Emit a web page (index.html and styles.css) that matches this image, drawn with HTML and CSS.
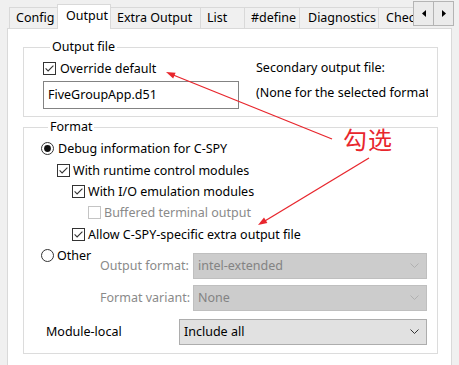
FILE: index.html
```html
<!DOCTYPE html>
<html>
<head>
<meta charset="utf-8">
<link rel="stylesheet" href="styles.css">
</head>
<body>
<div class="window">
  <div class="tabbar">
    <div class="tabstrip">
      <div class="tab w-config">Config</div>
      <div class="tab tab-sel w-output">Output</div>
      <div class="tab w-extra">Extra Output</div>
      <div class="tab w-list">List</div>
      <div class="tab w-define">#define</div>
      <div class="tab w-diag">Diagnostics</div>
      <div class="tab w-chec">Checker</div>
    </div>
    <div class="scroller">
      <div class="sbtn"><svg width="4" height="7" viewBox="0 0 4 7"><path d="M4 0 L0 3.5 L4 7 Z" fill="#000"/></svg></div>
      <div class="sbtn"><svg width="4" height="7" viewBox="0 0 4 7"><path d="M0 0 L4 3.5 L0 7 Z" fill="#000"/></svg></div>
    </div>
  </div>

  <div class="page">
    <fieldset class="group group-out">
      <legend>Output file</legend>
      <div class="out-cols">
        <div class="out-left">
          <label class="row">
            <svg class="ico" viewBox="0 0 13 13"><rect x="0.5" y="0.5" width="12" height="12" fill="#fff" stroke="#333"/><path d="M2.6 6.4 L5.1 8.9 L10.4 3.6" fill="none" stroke="#333" stroke-width="1.1"/></svg>
            <span>Override default</span>
          </label>
          <div class="textbox">FiveGroupApp.d51</div>
        </div>
        <div class="out-right">
          <div class="line">Secondary output file:</div>
          <div class="line line2">(None for the selected format)</div>
        </div>
      </div>
    </fieldset>

    <fieldset class="group group-fmt">
      <legend>Format</legend>
      <div class="frow ind0">
        <svg class="ico" viewBox="0 0 13 13"><circle cx="6.5" cy="6.5" r="6" fill="#fff" stroke="#333"/><circle cx="6.5" cy="6.5" r="3.4" fill="#111"/></svg>
        <span>Debug information for C-SPY</span>
      </div>
      <div class="frow ind1">
        <svg class="ico" viewBox="0 0 13 13"><rect x="0.5" y="0.5" width="12" height="12" fill="#fff" stroke="#333"/><path d="M2.6 6.4 L5.1 8.9 L10.4 3.6" fill="none" stroke="#333" stroke-width="1.1"/></svg>
        <span>With runtime control modules</span>
      </div>
      <div class="frow ind2">
        <svg class="ico" viewBox="0 0 13 13"><rect x="0.5" y="0.5" width="12" height="12" fill="#fff" stroke="#333"/><path d="M2.6 6.4 L5.1 8.9 L10.4 3.6" fill="none" stroke="#333" stroke-width="1.1"/></svg>
        <span>With I/O emulation modules</span>
      </div>
      <div class="frow ind3 disabled">
        <svg class="ico" viewBox="0 0 13 13"><rect x="0.5" y="0.5" width="12" height="12" fill="#fff" stroke="#c4c4c4"/></svg>
        <span>Buffered terminal output</span>
      </div>
      <div class="frow ind2">
        <svg class="ico" viewBox="0 0 13 13"><rect x="0.5" y="0.5" width="12" height="12" fill="#fff" stroke="#333"/><path d="M2.6 6.4 L5.1 8.9 L10.4 3.6" fill="none" stroke="#333" stroke-width="1.1"/></svg>
        <span>Allow C-SPY-specific extra output file</span>
      </div>
      <div class="other">
        <div class="other-radio">
          <svg class="ico" viewBox="0 0 13 13"><circle cx="6.5" cy="6.5" r="6" fill="#fff" stroke="#333"/></svg>
          <span>Other</span>
        </div>
        <div class="other-grid">
          <div class="lbl disabled">Output format:</div>
          <div class="select select-dis"><span>intel-extended</span><svg width="9" height="5" viewBox="0 0 9 5"><path d="M0.5 0.5 L4.5 4.5 L8.5 0.5" stroke="#b0b0b0" fill="none"/></svg></div>
          <div class="lbl disabled">Format variant:</div>
          <div class="select select-dis"><span>None</span><svg width="9" height="5" viewBox="0 0 9 5"><path d="M0.5 0.5 L4.5 4.5 L8.5 0.5" stroke="#b0b0b0" fill="none"/></svg></div>
        </div>
      </div>
      <div class="modrow">
        <div class="modlbl">Module-local</div>
        <div class="select select-en"><span>Include all</span><svg width="9" height="5" viewBox="0 0 9 5"><path d="M0.5 0.5 L4.5 4.5 L8.5 0.5" stroke="#333" fill="none"/></svg></div>
      </div>
    </fieldset>
  </div>

  <svg class="annot" width="459" height="365" viewBox="0 0 459 365">
    <line x1="332" y1="139" x2="172" y2="74.5" stroke="#e8262d" stroke-width="1.3"/>
    <path d="M166 72 L175.6 72.7 L173.2 78.6 Z" fill="#e8262d"/>
    <line x1="369" y1="158" x2="264" y2="221.5" stroke="#e8262d" stroke-width="1.3"/>
    <path d="M258 225 L267.4 223 L264 217.6 Z" fill="#e8262d"/>
  </svg>
  <div class="note">勾选</div>
</div>
</body>
</html>
```

FILE: styles.css
```css
html, body {
  margin: 0;
  padding: 0;
}
body {
  background: #f0f0f0;
  font-family: "Noto Sans", "Noto Sans CJK SC", sans-serif;
  font-size: 12.5px;
  color: #000;
  overflow: hidden;
}
.window {
  position: relative;
  width: 459px;
  height: 365px;
  overflow: hidden;
}

/* tabs */
.tabbar {
  display: flex;
  height: 29px;
  position: relative;
  z-index: 1;
}
.tabstrip {
  display: flex;
  align-items: flex-start;
  width: 413px;
  padding-left: 9px;
  box-sizing: border-box;
  overflow: hidden;
  flex: none;
}
.tab {
  flex: none;
  box-sizing: border-box;
  height: 21px;
  margin-top: 7px;
  margin-left: -1px;
  border: 1px solid #d9d9d9;
  border-bottom: none;
  background: #f0f0f0;
  padding-left: 6px;
  line-height: 19px;
  white-space: nowrap;
  overflow: hidden;
}
.tab:first-child { margin-left: 0; }
.tab-sel {
  background: #fff;
  height: 25px;
  margin-top: 4px;
  line-height: 21px;
  padding-left: 8px;
  position: relative;
  z-index: 2;
}
.w-config { width: 49px; }
.w-output { width: 54px; }
.w-extra { width: 91px; }
.w-list { width: 45px; }
.w-define { width: 56px; }
.w-diag { width: 80px; padding-left: 8px; }
.w-chec { width: 70px; padding-left: 7px; }

.scroller {
  display: flex;
  margin-top: 1px;
  height: 25px;
}
.sbtn {
  box-sizing: border-box;
  width: 21px;
  height: 25px;
  margin-left: -1px;
  border: 1px solid #b4b4b4;
  background: #ebebeb;
  display: flex;
  align-items: center;
  justify-content: center;
}
.sbtn:first-child { margin-left: 0; }

/* page */
.page {
  box-sizing: border-box;
  margin-top: -1px;
  margin-left: 7px;
  width: 445px;
  height: 360px;
  background: #fff;
  border: 1px solid #d9d9d9;
  padding: 10px 0 0 15px;
}
.group {
  box-sizing: border-box;
  width: 415px;
  margin: 0;
  border: 1px solid #dcdcdc;
  padding: 0;
  min-width: 0;
}
.group legend {
  margin-left: 7px;
  padding: 0 2px;
  line-height: 16px;
}
.group-out {
  padding: 3px 0 7px 19px;
}
.out-cols {
  display: flex;
  gap: 17px;
}
.out-left {
  width: 196px;
  flex: none;
}
.row {
  display: flex;
  align-items: center;
  height: 20px;
  gap: 4px;
}
.ico {
  width: 13px;
  height: 13px;
  flex: none;
}
.textbox {
  box-sizing: border-box;
  margin-top: 3px;
  height: 28px;
  border: 1px solid #838383;
  padding-left: 4px;
  line-height: 25px;
}
.out-right {
  width: 172px;
  overflow: hidden;
  white-space: nowrap;
}
.line {
  height: 20px;
  line-height: 20px;
}
.line2 { margin-top: 5px; }

.group-fmt {
  margin-top: 2px;
  padding: 3px 10px 8px 17px;
}
.frow {
  display: flex;
  align-items: center;
  height: 21.4px;
  gap: 4px;
  white-space: nowrap;
}
.ind1 { padding-left: 16px; gap: 3px; }
.ind2 { padding-left: 31px; gap: 3px; }
.ind3 { padding-left: 47px; gap: 3px; }
.disabled { color: #8a8a8a; }

.other {
  display: flex;
}
.other-radio {
  width: 59px;
  flex: none;
  height: 21px;
  display: flex;
  align-items: center;
  gap: 3px;
}
.other-grid {
  margin-top: 8px;
  display: grid;
  grid-template-columns: 87px 234px;
  column-gap: 6px;
  row-gap: 6px;
  align-items: center;
}
.lbl {
  text-align: right;
  white-space: nowrap;
}
.select {
  box-sizing: border-box;
  height: 26px;
  display: flex;
  align-items: center;
  justify-content: space-between;
  padding: 0 7px 0 4px;
  border: 1px solid #adadad;
}
.select-dis {
  background: #cccccc;
  border-color: #bfbfbf;
  color: #838383;
}
.select-en {
  background: #e1e1e1;
  width: 248px;
  flex: none;
}
.modrow {
  margin-top: 8px;
  display: flex;
  align-items: center;
}
.modlbl {
  width: 138px;
  padding-left: 5px;
  box-sizing: border-box;
  flex: none;
}

/* annotation overlay */
.annot {
  position: absolute;
  left: 0;
  top: 0;
  pointer-events: none;
  z-index: 5;
}
.note {
  position: absolute;
  left: 343px;
  top: 122px;
  font-family: "Noto Sans CJK SC", sans-serif;
  font-size: 24px;
  line-height: 34px;
  color: #e8262d;
  letter-spacing: 1px;
  z-index: 5;
}
```
